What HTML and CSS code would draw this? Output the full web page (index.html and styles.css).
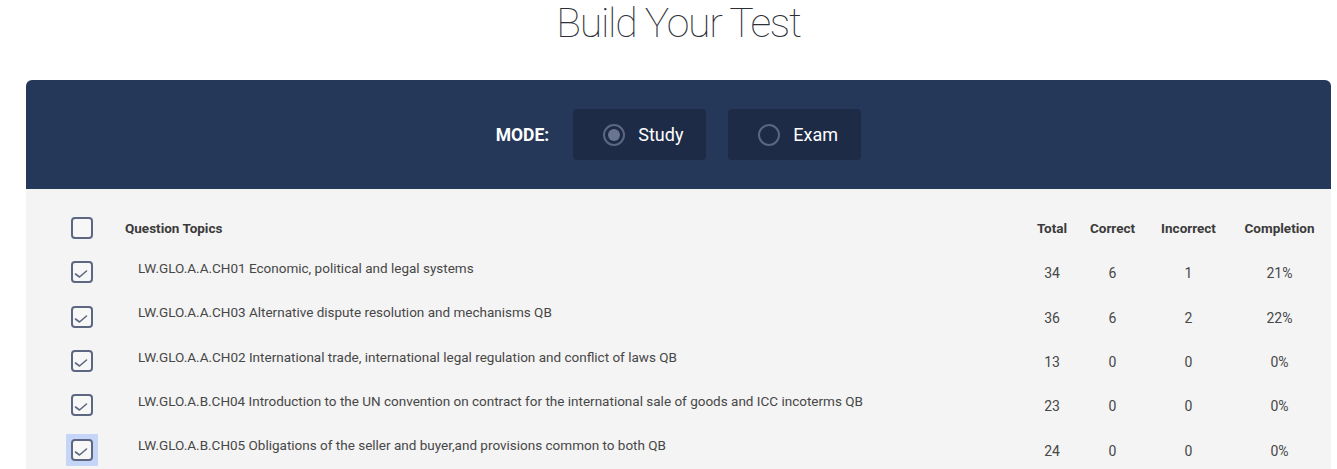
FILE: index.html
```html
<!DOCTYPE html>
<html>
<head>
<meta charset="utf-8">
<link rel="stylesheet" href="styles.css">
</head>
<body>
<div class="page">
  <h1 class="title">Build Your Test</h1>
  <div class="panel">
    <div class="mode-bar">
      <span class="mode-label">MODE:</span>
      <div class="mode-btn"><span class="radio radio-on"></span><span class="mode-text">Study</span></div>
      <div class="mode-btn"><span class="radio"></span><span class="mode-text">Exam</span></div>
    </div>
    <div class="table">
      <div class="row head">
        <div class="cell-check"><span class="box"></span></div>
        <div class="cell-topic">Question Topics</div>
        <div class="num">Total</div>
        <div class="num">Correct</div>
        <div class="num">Incorrect</div>
        <div class="num">Completion</div>
      </div>
      <div class="row">
        <div class="cell-check"><span class="box"><svg viewBox="0 0 18 18" class="tick"><path d="M2.5 11 L6.5 14 L13.5 8"/></svg></span></div>
        <div class="cell-topic topic">LW.GLO.A.A.CH01 Economic, political and legal systems</div>
        <div class="num">34</div><div class="num">6</div><div class="num">1</div><div class="num">21%</div>
      </div>
      <div class="row">
        <div class="cell-check"><span class="box"><svg viewBox="0 0 18 18" class="tick"><path d="M2.5 11 L6.5 14 L13.5 8"/></svg></span></div>
        <div class="cell-topic topic">LW.GLO.A.A.CH03 Alternative dispute resolution and mechanisms QB</div>
        <div class="num">36</div><div class="num">6</div><div class="num">2</div><div class="num">22%</div>
      </div>
      <div class="row">
        <div class="cell-check"><span class="box"><svg viewBox="0 0 18 18" class="tick"><path d="M2.5 11 L6.5 14 L13.5 8"/></svg></span></div>
        <div class="cell-topic topic">LW.GLO.A.A.CH02 International trade, international legal regulation and conflict of laws QB</div>
        <div class="num">13</div><div class="num">0</div><div class="num">0</div><div class="num">0%</div>
      </div>
      <div class="row">
        <div class="cell-check"><span class="box"><svg viewBox="0 0 18 18" class="tick"><path d="M2.5 11 L6.5 14 L13.5 8"/></svg></span></div>
        <div class="cell-topic topic">LW.GLO.A.B.CH04 Introduction to the UN convention on contract for the international sale of goods and ICC incoterms QB</div>
        <div class="num">23</div><div class="num">0</div><div class="num">0</div><div class="num">0%</div>
      </div>
      <div class="row">
        <div class="cell-check"><span class="focus-ring"><span class="box"><svg viewBox="0 0 18 18" class="tick"><path d="M2.5 11 L6.5 14 L13.5 8"/></svg></span></span></div>
        <div class="cell-topic topic">LW.GLO.A.B.CH05 Obligations of the seller and buyer,and provisions common to both QB</div>
        <div class="num">24</div><div class="num">0</div><div class="num">0</div><div class="num">0%</div>
      </div>
    </div>
  </div>
</div>
</body>
</html>
```
FILE: styles.css
```css
html, body {
  margin: 0;
  padding: 0;
  background: #ffffff;
  font-family: Roboto, "Liberation Sans", Arial, sans-serif;
}
.page {
  width: 1305px;
  margin-left: 26px;
}
.title {
  margin: 0 0 34px 0;
  font-size: 41px;
  line-height: 46px;
  font-weight: 100;
  color: #2b2f36;
  text-align: center;
  letter-spacing: -1.3px;
}
.panel {
  border-radius: 6px 6px 0 0;
  overflow: hidden;
  background: #f4f4f4;
}
.mode-bar {
  height: 109px;
  background: #263859;
  display: flex;
  align-items: center;
  justify-content: center;
  gap: 22px;
}
.mode-label {
  color: #ffffff;
  font-weight: 700;
  font-size: 17.5px;
  margin-right: 2px;
}
.mode-btn {
  width: 133px;
  height: 51px;
  box-sizing: border-box;
  padding-left: 30px;
  background: #1e2b47;
  border-radius: 4px;
  display: flex;
  align-items: center;
  gap: 13px;
}
.radio {
  width: 22px;
  height: 22px;
  box-sizing: border-box;
  border: 2px solid #5b6782;
  border-radius: 50%;
  display: flex;
  align-items: center;
  justify-content: center;
}
.radio-on::after {
  content: "";
  width: 12px;
  height: 12px;
  border-radius: 50%;
  background: #6a7591;
}
.mode-text {
  color: #ffffff;
  font-size: 18px;
}
.table {
  padding: 17px 6px 0 45px;
}
.row {
  display: grid;
  grid-template-columns: 54px 1fr 60px 61px 91px 91px;
  align-items: center;
  height: 44.3px;
  color: #474747;
  font-size: 14px;
}
.head {
  font-weight: 700;
  font-size: 13.5px;
  color: #3b3b3b;
}
.num {
  text-align: center;
  padding-top: 2px;
}
.head .num {
  padding-top: 0;
}
.topic {
  padding-left: 13px;
  margin-bottom: 9px;
  font-size: 13.5px;
  white-space: nowrap;
}
.cell-check {
  display: flex;
  align-items: center;
}
.box {
  display: block;
  width: 22px;
  height: 22px;
  box-sizing: border-box;
  border: 2px solid #5d6782;
  border-radius: 4px;
  background: #f7f7f7;
}
.focus-ring {
  display: block;
  padding: 5px;
  margin: -5px;
  background: #c4d5f7;
  border-radius: 1px;
}
.tick {
  display: block;
  width: 18px;
  height: 18px;
}
.tick path {
  fill: none;
  stroke: #5d6782;
  stroke-width: 1.6;
  stroke-linecap: round;
  stroke-linejoin: round;
}
```
